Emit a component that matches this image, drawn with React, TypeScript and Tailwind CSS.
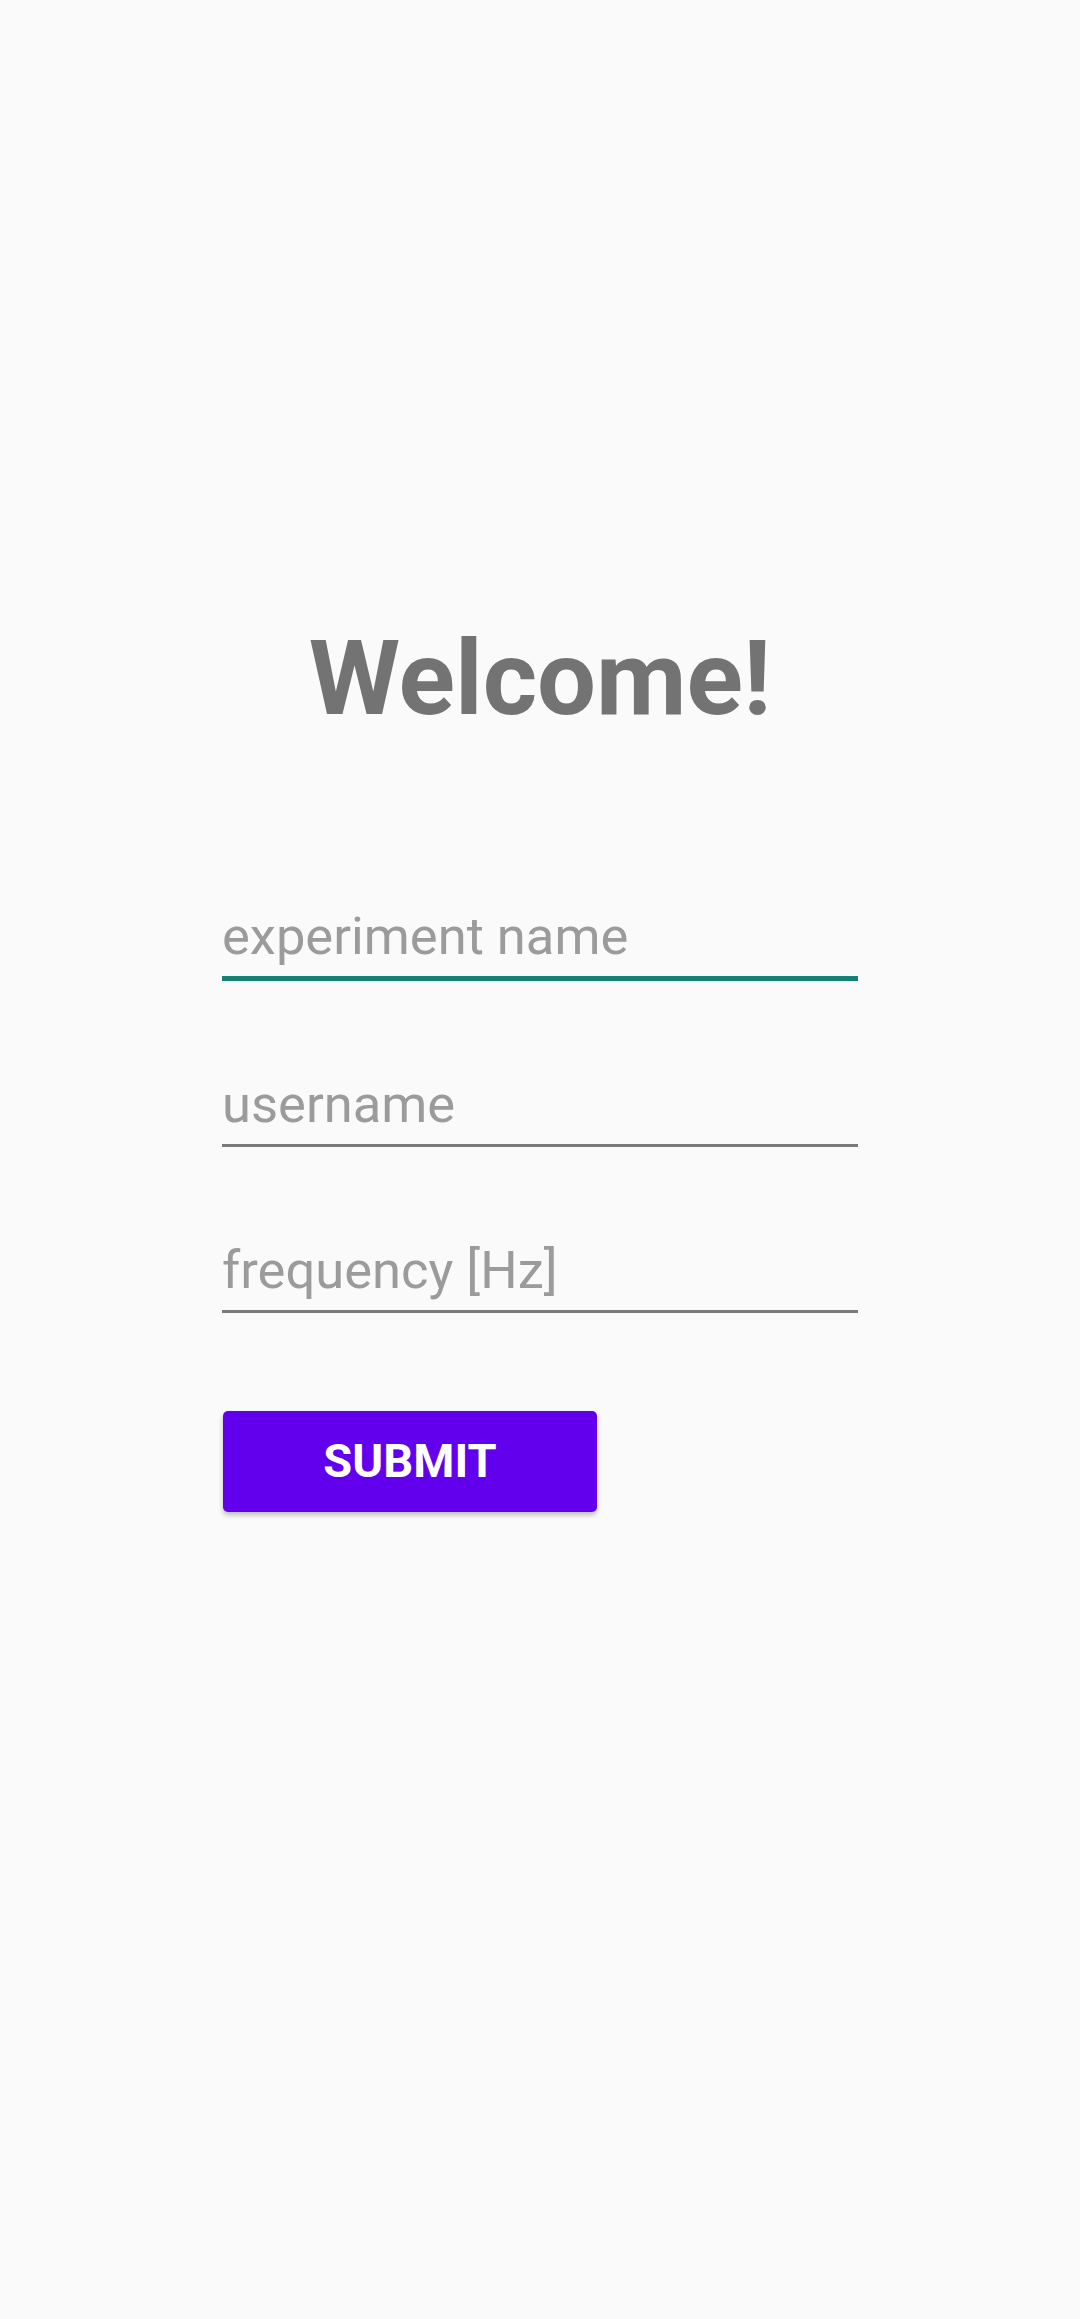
import React from "react";

export default function App() {
  const font = { fontFamily: "Roboto, 'Noto Sans', sans-serif" } as React.CSSProperties;
  return (
    <div className="min-h-[2319px] w-full bg-[#fafafa]" style={font}>
      <div className="flex flex-col pt-[618px]">
        <h1 className="text-center text-[104.5px] leading-[122px] font-bold text-[#737373]">Welcome!</h1>
        <div className="mx-auto mt-[165px] flex w-[636px] flex-col">
          <div className="border-b-[5px] border-[#138272] pb-[9px]">
            <span className="block text-[52.5px] leading-[62px] text-[#9b9b9b]">experiment name</span>
          </div>
          <div className="mt-[92px] border-b-[3px] border-[#7a7a7a] pb-[9px]">
            <span className="block text-[52.5px] leading-[62px] text-[#9b9b9b]">username</span>
          </div>
          <div className="mt-[92px] border-b-[3px] border-[#7a7a7a] pb-[9px]">
            <span className="block text-[52.5px] leading-[62px] text-[#9b9b9b]">frequency [Hz]</span>
          </div>
          <button className="ml-px mt-[98px] flex h-[101px] w-[374px] items-center justify-center rounded-[5px] bg-[#6200ee] text-[47px] font-bold text-white shadow-[0_3px_5px_rgba(0,0,0,0.25)]">
            SUBMIT
          </button>
        </div>
      </div>
    </div>
  );
}
